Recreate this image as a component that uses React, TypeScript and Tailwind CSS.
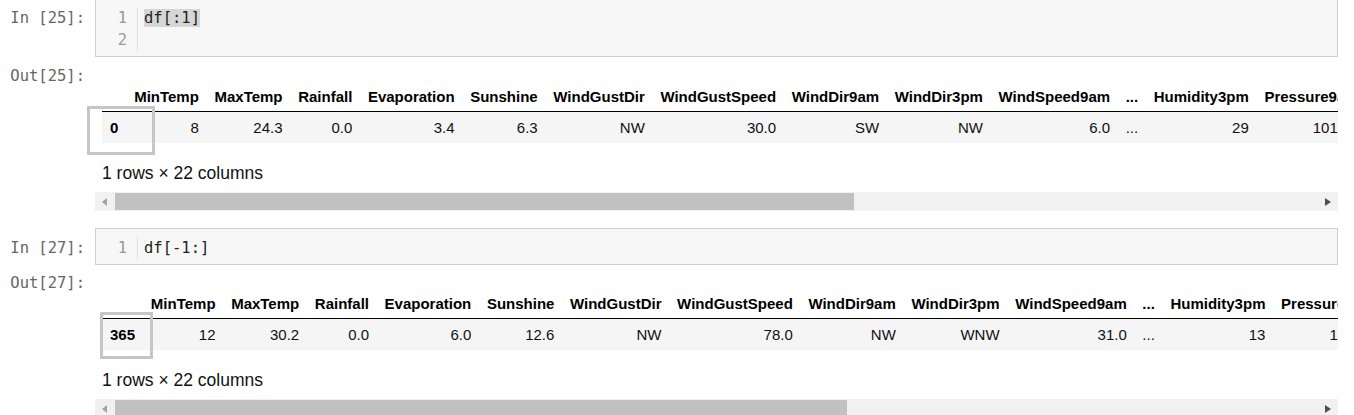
import type { ReactNode } from 'react'

const headers = [
  'MinTemp',
  'MaxTemp',
  'Rainfall',
  'Evaporation',
  'Sunshine',
  'WindGustDir',
  'WindGustSpeed',
  'WindDir9am',
  'WindDir3pm',
  'WindSpeed9am',
  '...',
  'Humidity3pm',
  'Pressure9am',
  'Pressure3pm',
  'Cloud9am',
  'Cloud3pm',
  'Temp9am',
  'Temp3pm',
  'RainToday',
  'RISK_MM',
  'RainTomorrow',
]

const first = ['8', '24.3', '0.0', '3.4', '6.3', 'NW', '30.0', 'SW', 'NW', '6.0', '...', '29', '1019.7', '1015.0', '7', '7', '14.4', '23.6', 'No', '3.6', 'Yes']
const last = ['12', '30.2', '0.0', '6.0', '12.6', 'NW', '78.0', 'NW', 'WNW', '31.0', '...', '13', '1009.6', '1009.2', '1', '1', '20.4', '28.8', 'No', '0.0', 'No']

const mono = "font-['DejaVu_Sans_Mono',monospace]"

function Prompt({ children }: { children: ReactNode }) {
  return (
    <div className={`w-[95px] shrink-0 pr-[10px] text-right text-[15.5px] leading-[22px] text-[#666] ${mono}`}>
      {children}
    </div>
  )
}

function InputCell({ n, lines, code, selected }: { n: number; lines: number; code: string; selected?: boolean }) {
  return (
    <div className="flex">
      <div className="pt-[9px]">
        <Prompt>In [{n}]:</Prompt>
      </div>
      <div className={`mr-[16px] flex flex-1 border border-[#cfcfcf] bg-[#f7f7f7] pt-[8px] pb-[5px] text-[15.5px] leading-[22px] ${mono}`}>
        <div className="w-[42px] border-r border-[#dddddd] pr-[10px] text-right text-[#999]">
          {Array.from({ length: lines }, (_, i) => (
            <div key={i}>{i + 1}</div>
          ))}
        </div>
        <div className="pl-[6px] text-[#222]">
          <span className={selected ? 'bg-[#d6d6d6]' : ''}>{code}</span>
        </div>
      </div>
    </div>
  )
}

function Scrollbar({ thumb }: { thumb: number }) {
  return (
    <div className="flex h-[19px] items-center bg-[#f1f1f1]">
      <div className="flex w-[20px] shrink-0 items-center justify-center">
        <svg width="6" height="8" viewBox="0 0 6 8">
          <path d="M5 0 L0 4 L5 8 Z" fill="#a3a3a3" />
        </svg>
      </div>
      <div className="h-[17px] bg-[#c1c1c1]" style={{ width: thumb }} />
      <div className="flex-1" />
      <div className="flex w-[20px] shrink-0 items-center justify-center">
        <svg width="6" height="8" viewBox="0 0 6 8">
          <path d="M0 0 L6 4 L0 8 Z" fill="#505050" />
        </svg>
      </div>
    </div>
  )
}

function OutputCell({ n, index, values, thumb }: { n: number; index: string; values: string[]; thumb: number }) {
  return (
    <div className="flex">
      <Prompt>Out[{n}]:</Prompt>
      <div className="mr-[16px] min-w-0 flex-1 pt-[16px]">
        <div className="overflow-hidden pl-[7px]">
          <table className="border-collapse whitespace-nowrap font-['Liberation_Sans',Arial,sans-serif] text-[15px] leading-[16px] text-black">
            <thead className="border-b border-black">
              <tr>
                <th className="px-[8px] pt-[8px] pb-[6px]" />
                {headers.map((h) => (
                  <th key={h} className="px-[7.8px] pt-[8px] pb-[6px] text-right font-bold">
                    {h}
                  </th>
                ))}
              </tr>
            </thead>
            <tbody>
              <tr className="bg-[#f5f5f5]">
                <th className="px-[8px] py-[7.5px] text-left font-bold">{index}</th>
                {values.map((v, i) => (
                  <td key={i} className="px-[7.8px] py-[7.5px] text-right text-[#111]">
                    {v}
                  </td>
                ))}
              </tr>
            </tbody>
          </table>
          <div className="mt-[20px] mb-[9px] font-['Liberation_Sans',Arial,sans-serif] text-[17.5px] leading-[20px] text-[#111]">
            1 rows × 22 columns
          </div>
        </div>
        <Scrollbar thumb={thumb} />
      </div>
    </div>
  )
}

export default function App() {
  return (
    <div className="relative h-[415px] w-[1354px] overflow-hidden bg-white">
      <div className="-mt-[2px] flex flex-col">
        <InputCell n={25} lines={2} code="df[:1]" selected />
        <div className="pt-[8px]">
          <OutputCell n={25} index="0" values={first} thumb={739} />
        </div>
        <div className="mt-[17px]">
          <InputCell n={27} lines={1} code="df[-1:]" />
        </div>
        <div className="pt-[7px]">
          <OutputCell n={27} index="365" values={last} thumb={732} />
        </div>
      </div>
      {/* focus outlines on the index cells */}
      <div className="pointer-events-none absolute left-[87px] top-[106px] h-[49px] w-[68px] border-[3px] border-[#c6c6c6]" />
      <div className="pointer-events-none absolute left-[100px] top-[312px] h-[47px] w-[53px] border-[3px] border-[#c6c6c6]" />
    </div>
  )
}
